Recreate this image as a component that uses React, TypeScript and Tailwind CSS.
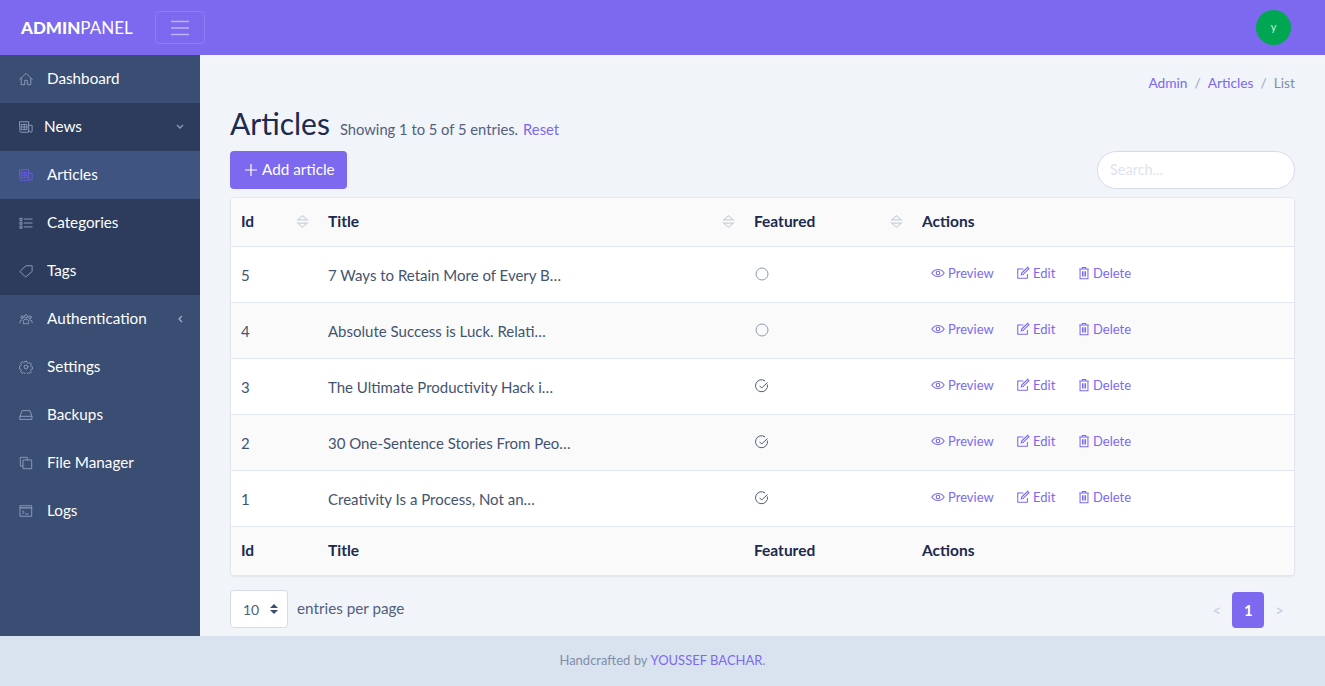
import React from "react";

const I = ({ children, className = "" }: { children: React.ReactNode; className?: string }) => (
  <svg viewBox="0 0 16 16" fill="none" stroke="currentColor" strokeWidth="1.100" strokeLinecap="round" strokeLinejoin="round" className={className}>
    {children}
  </svg>
);

const Home = () => (<><path d="M1 8.500 8 1.500l7 7" /><path d="M2.500 7v7.500h4V9.500h3v5h4V7" /></>);
const News = () => (<><path d="M1 2h10v12H2.500A1.500 1.500 0 0 1 1 12.500z" /><path d="M11 6h4v6.500a1.500 1.500 0 0 1-3 0" /><path d="M3 5h6v6H3zM3 8h6M6 5v6" /></>);
const ListI = () => (<><path d="M1.500 2.500h2v2.500h-2zM1.500 7h2v2.500h-2zM1.500 11.500h2V14h-2z" /><path d="M6 3.500h9M6 8h9M6 12.500h9" /></>);
const Tag = () => (<path d="M8.500 2H15v6.500L8 14.500a.8.8 0 0 1-1 0L1.500 9a.8.8 0 0 1 0-1z" />);
const Users = () => (<><circle cx="8" cy="5" r="1.800" /><circle cx="3.500" cy="6" r="1.500" /><circle cx="12.500" cy="6" r="1.500" /><path d="M5 13v-2A3 3 0 0 1 8 8a3 3 0 0 1 3 3v2z" /><path d="M1 12.500v-1A2.500 2.500 0 0 1 3.500 9M15 12.500v-1A2.500 2.500 0 0 0 12.500 9" /></>);
const Cog = () => (<><circle cx="8" cy="8" r="2.200" /><path d="M6.800 1.500h2.400l.4 1.800 1.300.6 1.600-1 1.700 1.700-1 1.600.6 1.300 1.700.4v2.400l-1.700.4-.6 1.300 1 1.600-1.700 1.700-1.600-1-1.300.6-.4 1.700H6.800l-.4-1.700-1.300-.6-1.600 1-1.700-1.700 1-1.600-.6-1.300-1.700-.4V6.800l1.700-.4.6-1.300-1-1.600 1.700-1.700 1.600 1 1.300-.6z" /></>);
const Hdd = () => (<><path d="M1.200 9.500 3.500 3h9l2.300 6.500V13H1.200z" /><path d="M1.200 9.500h13.600" /></>);
const Copy = () => (<><path d="M9.500 4.500v-3h-8v10h3" /><path d="M5 4.500h9.500v10H5z" /></>);
const Term = () => (<><path d="M1.500 2h13v12h-13z" /><path d="M1.500 4.500h13" strokeWidth="1.500" /><path d="m4 8 2 1.500L4 11M7.500 11.500h3" /></>);

const items = [
  { label: "Dashboard", icon: <Home />, cls: "bg-[#3a4d72]" },
  { label: "News", icon: <News />, cls: "bg-[#2d3c5c]", arrow: "down", tight: true },
  { label: "Articles", icon: <News />, cls: "bg-[#3f5481]", active: true },
  { label: "Categories", icon: <ListI />, cls: "bg-[#2d3c5c]" },
  { label: "Tags", icon: <Tag />, cls: "bg-[#2d3c5c]" },
  { label: "Authentication", icon: <Users />, cls: "", arrow: "left" },
  { label: "Settings", icon: <Cog />, cls: "" },
  { label: "Backups", icon: <Hdd />, cls: "" },
  { label: "File Manager", icon: <Copy />, cls: "" },
  { label: "Logs", icon: <Term />, cls: "" },
];

const rows = [
  { id: 5, title: "7 Ways to Retain More of Every B…", on: false },
  { id: 4, title: "Absolute Success is Luck. Relati…", on: false },
  { id: 3, title: "The Ultimate Productivity Hack i…", on: true },
  { id: 2, title: "30 One-Sentence Stories From Peo…", on: true },
  { id: 1, title: "Creativity Is a Process, Not an…", on: true },
];

const Sort = () => (
  <svg viewBox="0 0 12 14" className="w-[13px] h-[15px] text-[#c9cfd9]" fill="none" stroke="currentColor" strokeWidth="1">
    <path d="M1.500 5.500 6 1.500l4.500 4zM1.500 8.500 6 12.500l4.500-4z" />
  </svg>
);

const Eye = () => (
  <svg viewBox="0 0 16 16" className="w-3.5 h-3.5 mr-[3px]" fill="none" stroke="currentColor" strokeWidth="1.300">
    <path d="M1 8c2-3 4.300-4 7-4s5 1 7 4c-2 3-4.300 4-7 4s-5-1-7-4z" />
    <circle cx="8" cy="8" r="2" />
  </svg>
);
const Edit = () => (
  <svg viewBox="0 0 16 16" className="w-3.5 h-3.5 mr-[3px]" fill="none" stroke="currentColor" strokeWidth="1.200">
    <path d="M13 9v5H2V3.500h6.500" />
    <path d="m6.500 8 6.800-6.500 1.500 1.500L8 9.800l-2 .4z" />
  </svg>
);
const Trash = () => (
  <svg viewBox="0 0 16 16" className="w-3.5 h-3.5 mr-[2px]" fill="none" stroke="currentColor" strokeWidth="1.200">
    <path d="M2.500 3.500h11M6 3.500V1.800h4v1.700M3.500 3.500V14.500h9V3.500M6.300 6v6M8 6v6M9.700 6v6" />
  </svg>
);

const Action = ({ icon, label, className }: { icon: React.ReactNode; label: string; className: string }) => (
  <a className={`inline-flex items-center text-[13px] leading-none text-[#7c69ef] ${className}`}>
    {icon}
    {label}
  </a>
);

export default function App() {
  return (
    <div className="flex flex-col h-[686px] w-full overflow-hidden bg-[#f1f4f9] text-[#44546f] text-[15px] font-['Lato','Noto_Sans',sans-serif]">
      <header className="flex items-center h-[55px] bg-[#7c69ef] shrink-0">
        <div className="w-[155px] pl-[21px] text-[17px] text-white">
          <b className="font-black">ADMIN</b>PANEL
        </div>
        <button className="flex items-center justify-center w-[50px] h-[33px] rounded border border-[#8d7cf2]">
          <svg viewBox="0 0 18 16" className="w-[18px] h-4" stroke="#bdb3f7" strokeWidth="1.500">
            <path d="M0 1.500h18M0 8h18M0 14.500h18" />
          </svg>
        </button>
        <div className="ml-auto mr-[34px] flex items-center justify-center w-[35px] h-[35px] rounded-full bg-[#00a651] text-[#cdeeda] text-[11px]">
          y
        </div>
      </header>

      <div className="flex flex-1 min-h-0">
        <aside className="w-[200px] shrink-0 bg-[#3a4d72] text-white">
          {items.map((it) => (
            <div key={it.label} className={`flex items-center h-12 pl-[19px] pr-4 ${it.cls}`}>
              <I className={`w-3.5 h-3.5 shrink-0 ${it.active ? "text-[#6a5be0]" : "text-[#8a9bbd]"}`}>{it.icon}</I>
              <span className={`${it.tight ? "ml-[11px]" : "ml-3.5"} pb-[2px] text-[15.250px]`}>{it.label}</span>
              {it.arrow === "down" && (
                <svg viewBox="0 0 8 6" className="ml-auto w-2 h-1.5" fill="none" stroke="#8c9ab8" strokeWidth="1.300">
                  <path d="m1 1 3 3 3-3" />
                </svg>
              )}
              {it.arrow === "left" && (
                <svg viewBox="0 0 6 8" className="ml-auto mr-[1px] w-1.5 h-2" fill="none" stroke="#a3afc8" strokeWidth="1.300">
                  <path d="M5 1 2 4l3 3" />
                </svg>
              )}
            </div>
          ))}
        </aside>

        <main className="flex-1 min-w-0 px-[30px]">
          <nav className="flex justify-end gap-[7px] pt-[19px] h-[46px] text-[13.750px] leading-[17px]">
            <a className="text-[#7c69ef]">Admin</a>
            <span className="text-[#93a3bf]">/</span>
            <a className="text-[#7c69ef]">Articles</a>
            <span className="text-[#93a3bf]">/</span>
            <span className="text-[#7f8fa9]">List</span>
          </nav>

          <div className="flex items-baseline h-[50px] pt-[2px]">
            <h2 className="text-[30px] leading-[40px] font-normal text-[#1b2a4e]">Articles</h2>
            <span className="ml-2.5 text-[14.750px] text-[#51607c]">Showing 1 to 5 of 5 entries.</span>
            <a className="ml-[5px] text-[14.750px] text-[#7c69ef]">Reset</a>
          </div>

          <div className="flex justify-between h-[38px]">
            <button className="flex items-center h-[38px] w-[117px] pl-[15px] rounded bg-[#7c69ef] text-white text-[15.250px]">
              <svg viewBox="0 0 12 12" className="w-3 h-3 mr-[5px]" stroke="currentColor" strokeWidth="1.200">
                <path d="M6 0v12M0 6h12" />
              </svg>
              <span className="pb-[1px]">Add article</span>
            </button>
            <div className="flex items-center w-[198px] h-[38px] px-3 rounded-full bg-white border border-[#d5dbe8] text-[#dde4f0] text-[14.500px]">
              Search...
            </div>
          </div>

          <div className="mt-2 rounded border border-[#e1e6ef] bg-white shadow-[0_1px_2px_rgba(0,0,0,0.06)] overflow-hidden">
            <table className="w-full table-fixed border-collapse">
              <colgroup>
                <col className="w-[87px]" />
                <col className="w-[426px]" />
                <col className="w-[168px]" />
                <col />
              </colgroup>
              <thead>
                <tr className="h-[48px] bg-[#fafafa] border-b border-[#e1e6ef] text-[#1b2a4e] text-left">
                  {["Id", "Title", "Featured"].map((h) => (
                    <th key={h} className="pl-2.5 pr-[9px] font-bold text-[15.500px]">
                      <div className="flex items-center justify-between">
                        {h}
                        <Sort />
                      </div>
                    </th>
                  ))}
                  <th className="px-2.5 font-bold text-[15.500px]">Actions</th>
                </tr>
              </thead>
              <tbody>
                {rows.map((r, i) => (
                  <tr key={r.id} className={`h-14 border-b border-[#e1e6ef] ${i % 2 === 1 ? "bg-[#fafafa]" : "bg-white"}`}>
                    <td className="px-2.5 pt-[2px] text-[15px]">{r.id}</td>
                    <td className="px-2.5 pt-[2px] text-[15px] whitespace-nowrap">{r.title}</td>
                    <td className="px-2.5">
                      <svg viewBox="0 0 14 14" className={`ml-[1px] w-3.5 h-3.5 -mt-[1px] ${r.on ? "text-[#4f5d78]" : "text-[#8e99ae]"}`} fill="none" stroke="currentColor" strokeWidth="1">
                        {r.on ? (
                          <path d="M12.400 5.500A6 6 0 1 1 10.200 2M4.500 6.800 6.700 9l5.800-5.500" />
                        ) : (
                          <circle cx="7" cy="7" r="6" />
                        )}
                      </svg>
                    </td>
                    <td className="pl-[19px] pr-2.5">
                      <div className="flex items-center -mt-[2px]">
                        <Action icon={<Eye />} label="Preview" className="w-[85px]" />
                        <Action icon={<Edit />} label="Edit" className="w-[61px]" />
                        <Action icon={<Trash />} label="Delete" className="" />
                      </div>
                    </td>
                  </tr>
                ))}
              </tbody>
              <tfoot>
                <tr className="h-[49px] bg-[#fafafa] text-[#1b2a4e] text-left">
                  {["Id", "Title", "Featured", "Actions"].map((h) => (
                    <th key={h} className="px-2.5 font-bold text-[15.500px]">
                      {h}
                    </th>
                  ))}
                </tr>
              </tfoot>
            </table>
          </div>

          <div className="flex items-end justify-between mt-[14px]">
            <div className="flex items-center">
              <div className="flex items-center w-[58px] h-[38px] pl-3 rounded border border-[#d5dbe8] bg-white text-[14px] text-[#51607c]">
                10
                <svg viewBox="0 0 8 12" className="ml-[11px] w-2 h-3" fill="#3a4d72">
                  <path d="M4 1 8 5H0zM4 11 0 7h8z" />
                </svg>
              </div>
              <span className="ml-[9px] pb-[2px] text-[15.250px] text-[#51607c]">entries per page</span>
            </div>
            <div className="flex items-center text-[15px] text-[#c2cde0] pr-[11px]">
              <span>&lt;</span>
              <span className="flex items-center justify-center mx-[11px] w-8 h-9 rounded bg-[#7c69ef] text-white font-bold">1</span>
              <span>&gt;</span>
            </div>
          </div>
        </main>
      </div>

      <footer className="flex items-center justify-center h-[50px] pb-[1px] shrink-0 bg-[#d9e2ef] text-[13px] text-[#7f8fa9]">
        Handcrafted by&nbsp;<a className="text-[#7c69ef]">YOUSSEF BACHAR</a>.
      </footer>
    </div>
  );
}
